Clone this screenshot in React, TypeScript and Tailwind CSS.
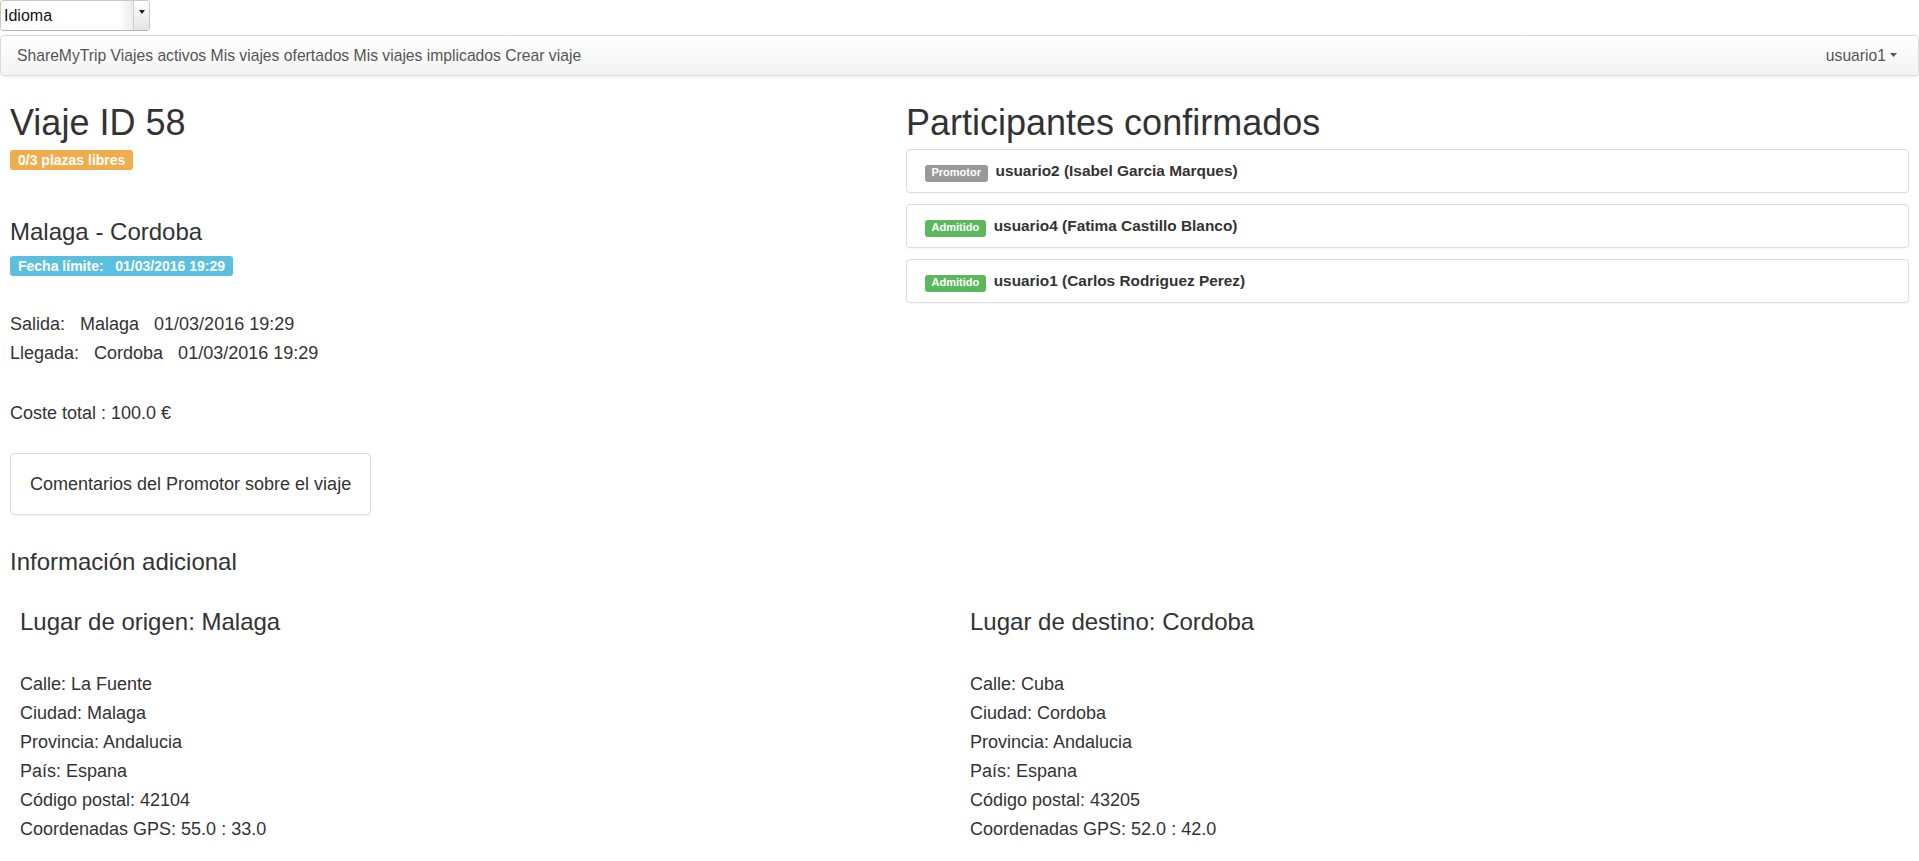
import React from 'react';

interface Participant {
  role: 'Promotor' | 'Admitido';
  user: string;
  name: string;
}

const participants: Participant[] = [
  { role: 'Promotor', user: 'usuario2', name: 'Isabel Garcia Marques' },
  { role: 'Admitido', user: 'usuario4', name: 'Fatima Castillo Blanco' },
  { role: 'Admitido', user: 'usuario1', name: 'Carlos Rodriguez Perez' },
];

const origen = [
  'Calle: La Fuente',
  'Ciudad: Malaga',
  'Provincia: Andalucia',
  'País: Espana',
  'Código postal: 42104',
  'Coordenadas GPS: 55.0 : 33.0',
];

const destino = [
  'Calle: Cuba',
  'Ciudad: Cordoba',
  'Provincia: Andalucia',
  'País: Espana',
  'Código postal: 43205',
  'Coordenadas GPS: 52.0 : 42.0',
];

const navLinks = ['ShareMyTrip', 'Viajes activos', 'Mis viajes ofertados', 'Mis viajes implicados', 'Crear viaje'];

const LanguageSelect: React.FC = () => (
  <div className="flex h-[31px] w-[150px] overflow-hidden rounded-[4px] border border-[#c8c8c8] border-b-[#b5b5b5] bg-white">
    <div className="flex flex-1 items-center pl-[3px] text-[16px] text-[#111]">Idioma</div>
    <div className="w-[15px] bg-gradient-to-r from-white to-[#ececec]" />
    <div className="flex w-[16px] justify-center border-l border-[#cfcfcf] bg-gradient-to-b from-white to-[#e4e4e4] pt-[9px]">
      <svg width="6" height="4" viewBox="0 0 6 4">
        <path d="M0 0 L6 0 L3 4 Z" fill="#222" />
      </svg>
    </div>
  </div>
);

const Navbar: React.FC = () => (
  <nav className="mt-[4px] flex h-[41px] items-center justify-between rounded-[4px] border border-[#dadada] bg-gradient-to-b from-white to-[#f3f3f3] pl-[16px] pr-[21px] text-[15.7px] text-[#555] shadow-[0_1px_4px_rgba(0,0,0,0.08)]">
    <div className="whitespace-pre">
      {navLinks.map((link, i) => (
        <React.Fragment key={link}>
          <a href="#" className="hover:text-[#333]">
            {link}
          </a>
          {i < navLinks.length - 1 ? ' ' : ''}
        </React.Fragment>
      ))}
    </div>
    <a href="#" className="flex items-center">
      usuario1
      <svg className="ml-[4px]" width="7" height="4" viewBox="0 0 7 4">
        <path d="M0 0 L7 0 L3.5 4 Z" fill="#555" />
      </svg>
    </a>
  </nav>
);

const Label: React.FC<{ color: string; children: React.ReactNode }> = ({ color, children }) => (
  <div className="flex">
    <span className={`inline-flex h-[20px] items-center whitespace-pre rounded-[3px] px-[8px] text-[14px] font-bold leading-none text-white ${color}`}>
      {children}
    </span>
  </div>
);

const App: React.FC = () => {
  return (
    <div className="min-h-screen bg-white font-['Liberation_Sans',Arial,sans-serif] text-[#333]">
      <LanguageSelect />
      <Navbar />

      <main className="px-[10px]">
        <div className="flex">
          <section className="w-[896px]">
            <h1 className="mt-[27px] text-[36px] leading-[40px]">Viaje ID 58</h1>
            <div className="mt-[7px]">
              <Label color="bg-[#f0ad4e]">0/3 plazas libres</Label>
            </div>

            <h3 className="mt-[49px] text-[24px] leading-[26px]">Malaga - Cordoba</h3>
            <div className="mt-[11px]">
              <Label color="bg-[#5bc0de]">{'Fecha límite:   01/03/2016 19:29'}</Label>
            </div>

            <div className="mt-[34px] whitespace-pre text-[18px] leading-[29px]">
              <p>{'Salida:   Malaga   01/03/2016 19:29'}</p>
              <p>{'Llegada:   Cordoba   01/03/2016 19:29'}</p>
            </div>

            <p className="mt-[31px] text-[18px] leading-[29px]">Coste total : 100.0 €</p>

            <div className="mt-[25px] flex h-[62px] w-fit items-center whitespace-nowrap rounded-[4px] border border-[#ddd] px-[19px] text-[18px] shadow-[0_1px_1px_rgba(0,0,0,0.04)]">
              Comentarios del Promotor sobre el viaje
            </div>
          </section>

          <section className="flex-1">
            <h1 className="mt-[27px] text-[36px] leading-[40px]">Participantes confirmados</h1>
            <div className="mt-[6px] flex flex-col gap-[11px]">
              {participants.map((p) => (
                <div
                  key={p.user}
                  className="flex h-[44px] items-center rounded-[4px] border border-[#ddd] bg-white pl-[18px] shadow-[0_1px_1px_rgba(0,0,0,0.04)]"
                >
                  <span className="text-[15.4px] font-bold">
                    <span
                      className={`mr-[8px] inline-block rounded-[3px] px-[6.5px] pb-[3.3px] pt-[2.2px] align-baseline text-[11px] font-bold leading-none text-white ${
                        p.role === 'Promotor' ? 'bg-[#999]' : 'bg-[#5cb85c]'
                      }`}
                    >
                      {p.role}
                    </span>
                    {p.user} ({p.name})
                  </span>
                </div>
              ))}
            </div>
          </section>
        </div>

        <h3 className="mt-[34px] text-[24px] leading-[26px]">Información adicional</h3>

        <div className="mt-[34px] grid grid-cols-[950px_1fr] pl-[10px]">
          {[
            { title: 'Lugar de origen: Malaga', lines: origen },
            { title: 'Lugar de destino: Cordoba', lines: destino },
          ].map((col) => (
            <div key={col.title}>
              <h3 className="text-[24px] leading-[26px]">{col.title}</h3>
              <div className="mt-[35px] text-[18px] leading-[29px]">
                {col.lines.map((line) => (
                  <p key={line}>{line}</p>
                ))}
              </div>
            </div>
          ))}
        </div>
      </main>
    </div>
  );
};

export default App;
